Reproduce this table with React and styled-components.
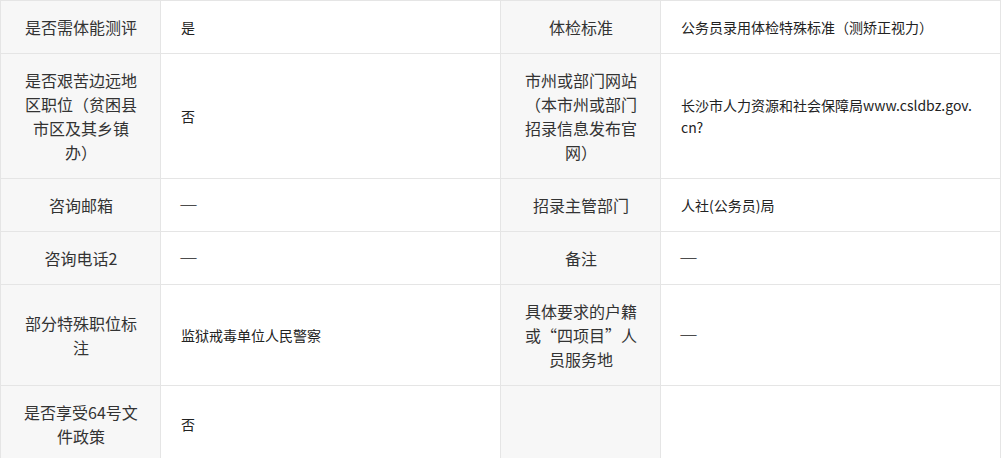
import React from 'react';
import styled, { createGlobalStyle } from 'styled-components';

const GlobalStyle = createGlobalStyle`
  html, body {
    margin: 0;
    padding: 0;
    background: #fff;
  }
  body {
    font-family: "Noto Sans CJK SC", "Noto Sans", sans-serif;
    color: #333;
  }
`;

const StyledTable = styled.table`
  width: 1001px;
  border-collapse: collapse;
  table-layout: fixed;
  text-spacing-trim: space-all;
`;

const StyledLabel = styled.td`
  width: 120px;
  padding: 14px 19px 14px 20px;
  background-color: #f7f7f7;
  border: 1px solid #e5e5e5;
  font-size: 16px;
  line-height: 24px;
  text-align: center;
  vertical-align: middle;
  color: #333;
  word-break: break-all;
`;

const StyledValue = styled.td`
  width: 294px;
  padding: 14px 25px 14px 20px;
  background-color: #fff;
  border: 1px solid #e5e5e5;
  font-size: 14px;
  line-height: 22px;
  text-align: left;
  vertical-align: middle;
  color: #222;
  word-break: break-all;
`;

const StyledDash = styled.span`
  display: inline-block;
  margin-left: -2px;
  font-family: "Noto Sans CJK SC", sans-serif;
  font-variant-east-asian: full-width;
  font-feature-settings: "fwid" 1;
  font-size: 19px;
  line-height: 22px;
  vertical-align: top;
`;

const DASH = '—';

const rows = [
  ['是否需体能测评', '是', '体检标准', '公务员录用体检特殊标准（测矫正视力）'],
  ['是否艰苦边远地区职位（贫困县市区及其乡镇办）', '否', '市州或部门网站（本市州或部门招录信息发布官网）', '长沙市人力资源和社会保障局www.csldbz.gov.cn?'],
  ['咨询邮箱', DASH, '招录主管部门', '人社(公务员)局'],
  ['咨询电话2', DASH, '备注', DASH],
  ['部分特殊职位标注', '监狱戒毒单位人民警察', '具体要求的户籍或“四项目”人员服务地', DASH],
  ['是否享受64号文件政策', '否', '', ''],
];

const renderValue = (text) => (text === DASH ? <StyledDash>{DASH}</StyledDash> : text);

class App extends React.Component {
  render() {
    return (
      <>
        <GlobalStyle />
        <StyledTable lang="zh-CN">
          <tbody>
            {rows.map((row, i) => (
              <tr key={i}>
                <StyledLabel>{row[0]}</StyledLabel>
                <StyledValue>{renderValue(row[1])}</StyledValue>
                <StyledLabel>{row[2]}</StyledLabel>
                <StyledValue>{renderValue(row[3])}</StyledValue>
              </tr>
            ))}
          </tbody>
        </StyledTable>
      </>
    );
  }
}

export default App;
